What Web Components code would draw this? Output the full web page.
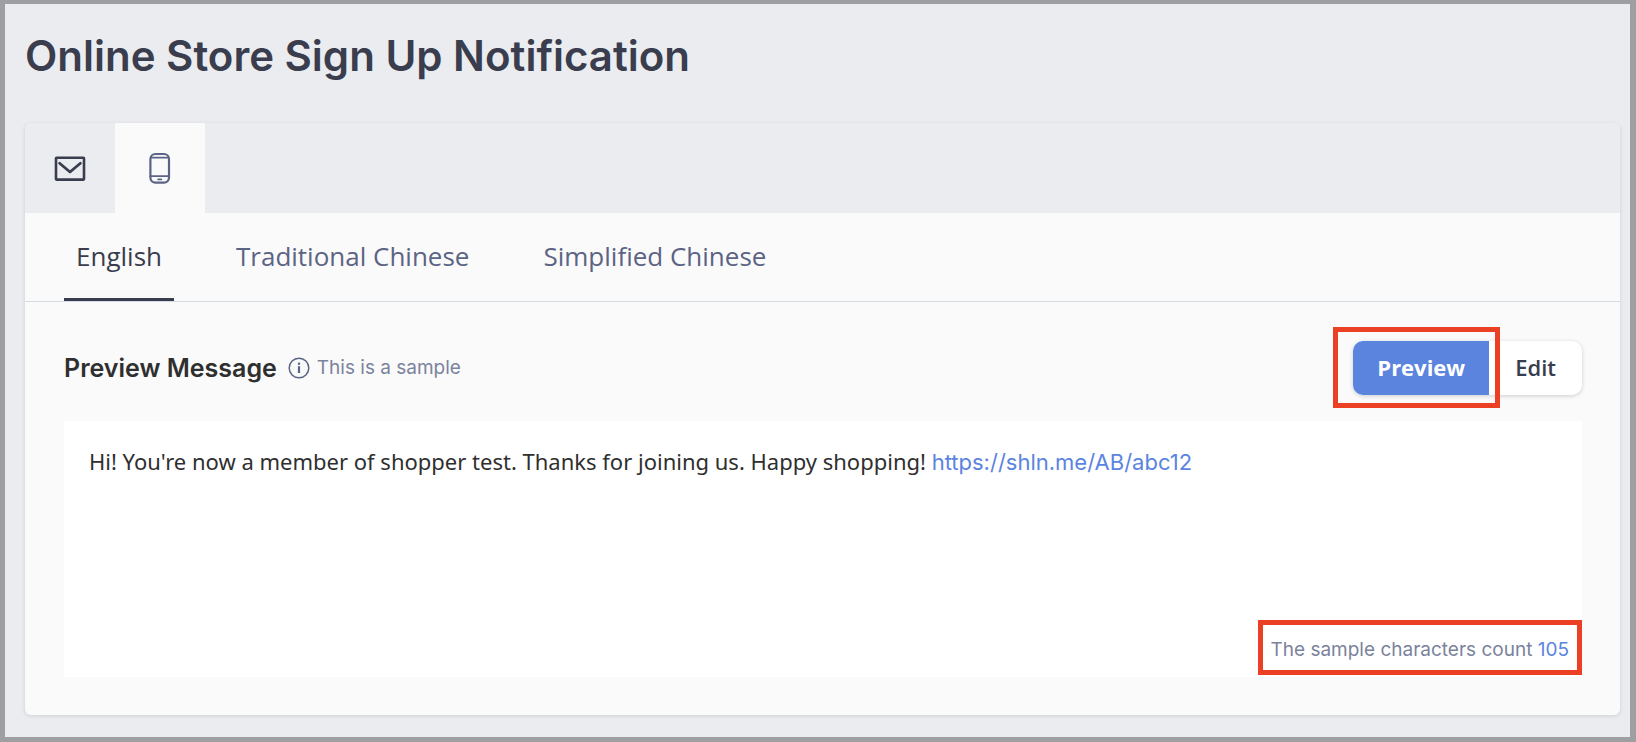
<!DOCTYPE html>
<html lang="en">
<head>
<meta charset="utf-8">
<meta name="viewport" content="width=device-width, initial-scale=1">
<title>Online Store Sign Up Notification</title>
<style>
  body {
    margin: 0;
    font-family: "Open Sans", "Noto Sans", sans-serif;
    color: #2f2f2f;
    --ui-font: Inter, "Liberation Sans", sans-serif;
    --ink: #393d4d;
    --slate: #5b6484;
    --muted: #7b839c;
    --blue: #5b84df;
    --red: #ec4024;
  }
</style>
</head>
<body>
<notification-page heading="Online Store Sign Up Notification">
  <channel-tabs slot="channels"></channel-tabs>
  <language-tabs slot="languages" languages="English,Traditional Chinese,Simplified Chinese" selected="English"></language-tabs>
  <message-preview heading="Preview Message" hint="This is a sample" count="105">
    Hi! You're now a member of shopper test. Thanks for joining us. Happy shopping!
    <a href="https://shln.me/AB/abc12">https://shln.me/AB/abc12</a>
  </message-preview>
</notification-page>

<script>
class NotificationPage extends HTMLElement {
  constructor() {
    super();
    this.attachShadow({ mode: "open" });
  }

  connectedCallback() {
    const heading = this.getAttribute("heading") || "";

    this.shadowRoot.innerHTML = `
      <style>
        :host {
          display: flex;
          flex-direction: column;
          box-sizing: border-box;
          min-height: 100vh;
          padding: 24px 10px 22px 20px;
          background: #ebecf0;
          border: solid #9e9fa1;
          border-width: 4px 6px 5px 5px;
        }

        h1 {
          margin: 0 0 39px;
          font-family: var(--ui-font);
          font-size: 42px;
          line-height: 56px;
          font-weight: 600;
          color: var(--ink);
        }

        main {
          flex: 1;
          display: flex;
          flex-direction: column;
          background: #fafafa;
          border-radius: 6px;
          box-shadow: 0 1px 4px rgba(0, 0, 0, 0.12);
        }

        ::slotted(message-preview) {
          flex: 1;
        }
      </style>
      <h1>${heading}</h1>
      <main>
        <slot name="channels"></slot>
        <slot name="languages"></slot>
        <slot></slot>
      </main>
    `;
  }
}

class ChannelTabs extends HTMLElement {
  constructor() {
    super();
    this.attachShadow({ mode: "open" });
  }

  connectedCallback() {
    this.shadowRoot.innerHTML = `
      <style>
        :host {
          display: flex;
          background: #ebecf0;
          border-radius: 6px 6px 0 0;
        }

        button {
          display: grid;
          place-items: center;
          width: 90px;
          height: 90px;
          padding: 0;
          border: 0;
          background: transparent;
          color: var(--ink);
          cursor: pointer;
        }

        button[aria-pressed="true"] {
          background: #fafafa;
          color: var(--slate);
        }

        svg {
          display: block;
          fill: none;
          stroke: currentColor;
          stroke-linecap: round;
          stroke-linejoin: round;
        }
      </style>
      <button type="button" aria-label="Email" aria-pressed="false">
        <svg width="32" height="32" viewBox="0 0 32 32">
          <rect x="2" y="5.8" width="28" height="21.8" rx="0.5" stroke-width="2.6"/>
          <path d="M5.6 11.2 16 20 26.4 11.2" stroke-width="2.8"/>
        </svg>
      </button>
      <button type="button" aria-label="Text message" aria-pressed="true">
        <svg width="32" height="32" viewBox="0 0 32 32" stroke-width="2.2">
          <rect x="6.4" y="2" width="18.6" height="28.6" rx="5"/>
          <path d="M7.4 5.6H24M6.4 24.2H25" stroke-width="1.8"/>
          <path d="M14.2 27.4H17.2" stroke-width="1.8"/>
        </svg>
      </button>
    `;
  }
}

class LanguageTabs extends HTMLElement {
  constructor() {
    super();
    this.attachShadow({ mode: "open" });
  }

  connectedCallback() {
    const languages = (this.getAttribute("languages") || "").split(",");
    const selected = this.getAttribute("selected");

    this.shadowRoot.innerHTML = `
      <style>
        :host {
          display: block;
          border-bottom: 1px solid #d5dbe3;
        }

        div {
          display: flex;
          gap: 50px;
          padding: 0 39px;
        }

        button {
          padding: 0 12px;
          height: 88px;
          border: 0 solid transparent;
          border-bottom-width: 3px;
          background: none;
          font: 26px/36px "Open Sans", "Noto Sans", sans-serif;
          color: var(--slate);
          cursor: pointer;
        }

        button[aria-selected="true"] {
          color: var(--ink);
          border-bottom-color: var(--ink);
        }
      </style>
      <div role="tablist">
        ${languages
          .map((name) => `<button type="button" role="tab" aria-selected="${name === selected}">${name}</button>`)
          .join("")}
      </div>
    `;
  }
}

class MessagePreview extends HTMLElement {
  constructor() {
    super();
    this.attachShadow({ mode: "open" });
  }

  connectedCallback() {
    const heading = this.getAttribute("heading") || "";
    const hint = this.getAttribute("hint") || "";
    const count = this.getAttribute("count") || "0";

    this.shadowRoot.innerHTML = `
      <style>
        :host {
          display: flex;
          flex-direction: column;
          gap: 26px;
          padding: 39px 38px 38px 39px;
        }

        header {
          display: flex;
          align-items: center;
        }

        h2 {
          margin: 0 11px 0 0;
          font-family: var(--ui-font);
          font-size: 25px;
          line-height: 32px;
          font-weight: 600;
        }

        .hint {
          display: flex;
          align-items: center;
          gap: 7px;
          flex: 1;
        }

        .hint,
        .count {
          font-family: var(--ui-font);
          font-size: 19px;
          line-height: 26px;
          color: var(--muted);
        }

        svg {
          fill: none;
          stroke: var(--slate);
        }

        .box {
          flex: 1;
          display: flex;
          flex-direction: column;
          justify-content: space-between;
          background: #fff;
          padding-bottom: 2px;
        }

        p {
          margin: 0;
          padding: 24px 25px;
          font-family: "Noto Sans", "Open Sans", sans-serif;
          font-size: 22px;
          line-height: 32px;
        }

        ::slotted(a) {
          font-family: var(--ui-font);
          color: var(--blue);
          text-decoration: none;
        }

        .count {
          align-self: flex-end;
          padding: 12px 8px 7px 7px;
          border: 5px solid var(--red);
        }

        .count b {
          font-weight: 400;
          color: var(--blue);
        }
      </style>
      <header>
        <h2>${heading}</h2>
        <span class="hint">
          <svg width="22" height="22" viewBox="0 0 22 22" aria-hidden="true">
            <circle cx="11" cy="11" r="9.8" stroke-width="1.5"/>
            <path d="M11 9.2V16" stroke-width="2.2"/>
            <path d="M11 5.6V7.8" stroke-width="2.2"/>
          </svg>
          ${hint}
        </span>
        <mode-switch></mode-switch>
      </header>
      <div class="box">
        <p><slot></slot></p>
        <div class="count">The sample characters count <b>${count}</b></div>
      </div>
    `;
  }
}

class ModeSwitch extends HTMLElement {
  constructor() {
    super();
    this.attachShadow({ mode: "open" });
  }

  connectedCallback() {
    this.shadowRoot.innerHTML = `
      <style>
        :host {
          display: flex;
          position: relative;
          border-radius: 10px;
          background: #fff;
          box-shadow: 0 1px 4px rgba(0, 0, 0, 0.18);
        }

        .marked {
          position: relative;
        }

        /* red outline drawn over the buttons */
        .marked::after {
          content: "";
          position: absolute;
          inset: -14px -11px -13px -20px;
          border: 5px solid var(--red);
          pointer-events: none;
        }

        button {
          display: block;
          height: 54px;
          padding: 0 26px 2px;
          border: 0;
          border-radius: 0 10px 10px 0;
          background: none;
          font: 600 22px/32px "Open Sans", "Noto Sans", sans-serif;
          color: var(--ink);
          cursor: pointer;
        }

        button[aria-pressed="true"] {
          padding: 0 24px 2px;
          border-radius: 10px 0 0 10px;
          background: var(--blue);
          font-weight: 700;
          color: #fff;
        }
      </style>
      <span class="marked"><button type="button" aria-pressed="true">Preview</button></span>
      <button type="button" aria-pressed="false">Edit</button>
    `;
  }
}

customElements.define("notification-page", NotificationPage);
customElements.define("channel-tabs", ChannelTabs);
customElements.define("language-tabs", LanguageTabs);
customElements.define("message-preview", MessagePreview);
customElements.define("mode-switch", ModeSwitch);
</script>
</body>
</html>
